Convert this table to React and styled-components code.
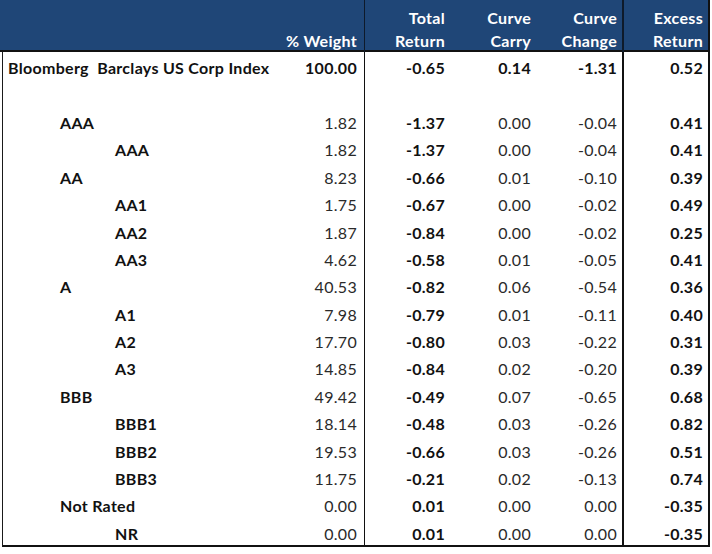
import React from "react";
import styled, { createGlobalStyle } from "styled-components";

const Global = createGlobalStyle`
  html, body { margin: 0; padding: 0; background: #ffffff; }
  body { font-family: Lato, "Open Sans", "Liberation Sans", sans-serif; }
`;

const COLS = "267px 94px 86px 86px 86px 85px";

const Table = styled.div`
  margin-left: 2px;
  width: 708px;
  box-sizing: border-box;
  border-left: 1px solid #1a1a1a;
  border-right: 2px solid #111;
  border-bottom: 2px solid #111;
  box-shadow: 0 2px 0 #9a9a9a;
  font-size: 16px;
  letter-spacing: 0.3px;
  color: #1e1e1e;
`;

const HeaderRow = styled.div`
  display: grid;
  grid-template-columns: ${COLS};
  height: 50px;
  background: #1f4677;
  border-bottom: 2px solid #111;
  margin-left: -3px;
  padding-left: 3px;
`;

const HeadCell = styled.div`
  display: flex;
  flex-direction: column;
  justify-content: flex-start;
  align-items: flex-end;
  box-sizing: border-box;
  padding: ${(p) => (p.$single ? 29 : 6)}px ${(p) => p.$pr}px 0 0;
  color: #ffffff;
  font-weight: 700;
  line-height: 23px;
  border-left: ${(p) => p.$bl || 0}px solid #0e1a2a;
`;

const Row = styled.div`
  display: grid;
  grid-template-columns: ${COLS};
  height: 27.4px;
`;

const Label = styled.div`
  box-sizing: border-box;
  padding-left: ${(p) => [5, 57, 112][p.$level]}px;
  padding-top: 4px;
  display: flex;
  align-items: center;
  font-weight: 700;
  white-space: pre;
  color: #111;
`;

const Num = styled.div`
  box-sizing: border-box;
  display: flex;
  align-items: center;
  justify-content: flex-end;
  padding-top: 4px;
  padding-right: ${(p) => p.$pr}px;
  font-weight: ${(p) => (p.$bold ? 700 : 400)};
  color: ${(p) => (p.$bold ? "#111" : "#2a2a2a")};
  border-left: ${(p) => p.$bl || 0}px solid #111;
`;

const rows = [
  { label: "Bloomberg  Barclays US Corp Index", level: 0, v: ["100.00", "-0.65", "0.14", "-1.31", "0.52"], top: true },
  { blank: true },
  { label: "AAA", level: 1, v: ["1.82", "-1.37", "0.00", "-0.04", "0.41"] },
  { label: "AAA", level: 2, v: ["1.82", "-1.37", "0.00", "-0.04", "0.41"] },
  { label: "AA", level: 1, v: ["8.23", "-0.66", "0.01", "-0.10", "0.39"] },
  { label: "AA1", level: 2, v: ["1.75", "-0.67", "0.00", "-0.02", "0.49"] },
  { label: "AA2", level: 2, v: ["1.87", "-0.84", "0.00", "-0.02", "0.25"] },
  { label: "AA3", level: 2, v: ["4.62", "-0.58", "0.01", "-0.05", "0.41"] },
  { label: "A", level: 1, v: ["40.53", "-0.82", "0.06", "-0.54", "0.36"] },
  { label: "A1", level: 2, v: ["7.98", "-0.79", "0.01", "-0.11", "0.40"] },
  { label: "A2", level: 2, v: ["17.70", "-0.80", "0.03", "-0.22", "0.31"] },
  { label: "A3", level: 2, v: ["14.85", "-0.84", "0.02", "-0.20", "0.39"] },
  { label: "BBB", level: 1, v: ["49.42", "-0.49", "0.07", "-0.65", "0.68"] },
  { label: "BBB1", level: 2, v: ["18.14", "-0.48", "0.03", "-0.26", "0.82"] },
  { label: "BBB2", level: 2, v: ["19.53", "-0.66", "0.03", "-0.26", "0.51"] },
  { label: "BBB3", level: 2, v: ["11.75", "-0.21", "0.02", "-0.13", "0.74"] },
  { label: "Not Rated", level: 1, v: ["0.00", "0.01", "0.00", "0.00", "-0.35"] },
  { label: "NR", level: 2, v: ["0.00", "0.01", "0.00", "0.00", "-0.35"] },
];

const PR = [7, 5, 5, 5, 4];
const BL = [0, 1, 0, 0, 2];
const BOLD_ALWAYS = [false, true, false, false, true];

export default function App() {
  return (
    <>
      <Global />
      <Table>
        <HeaderRow>
          <div />
          <HeadCell $pr={7} $single>
            <span>% Weight</span>
          </HeadCell>
          <HeadCell $pr={5} $bl={1}>
            <span>Total</span>
            <span>Return</span>
          </HeadCell>
          <HeadCell $pr={5}>
            <span>Curve</span>
            <span>Carry</span>
          </HeadCell>
          <HeadCell $pr={5}>
            <span>Curve</span>
            <span>Change</span>
          </HeadCell>
          <HeadCell $pr={4} $bl={2}>
            <span>Excess</span>
            <span>Return</span>
          </HeadCell>
        </HeaderRow>
        {rows.map((r, i) => (
          <Row key={i}>
            <Label $level={r.level || 0}>{r.label || ""}</Label>
            {[0, 1, 2, 3, 4].map((c) => (
              <Num key={c} $pr={PR[c]} $bl={BL[c]} $bold={r.top || BOLD_ALWAYS[c]}>
                {r.blank ? "" : r.v[c]}
              </Num>
            ))}
          </Row>
        ))}
      </Table>
    </>
  );
}
